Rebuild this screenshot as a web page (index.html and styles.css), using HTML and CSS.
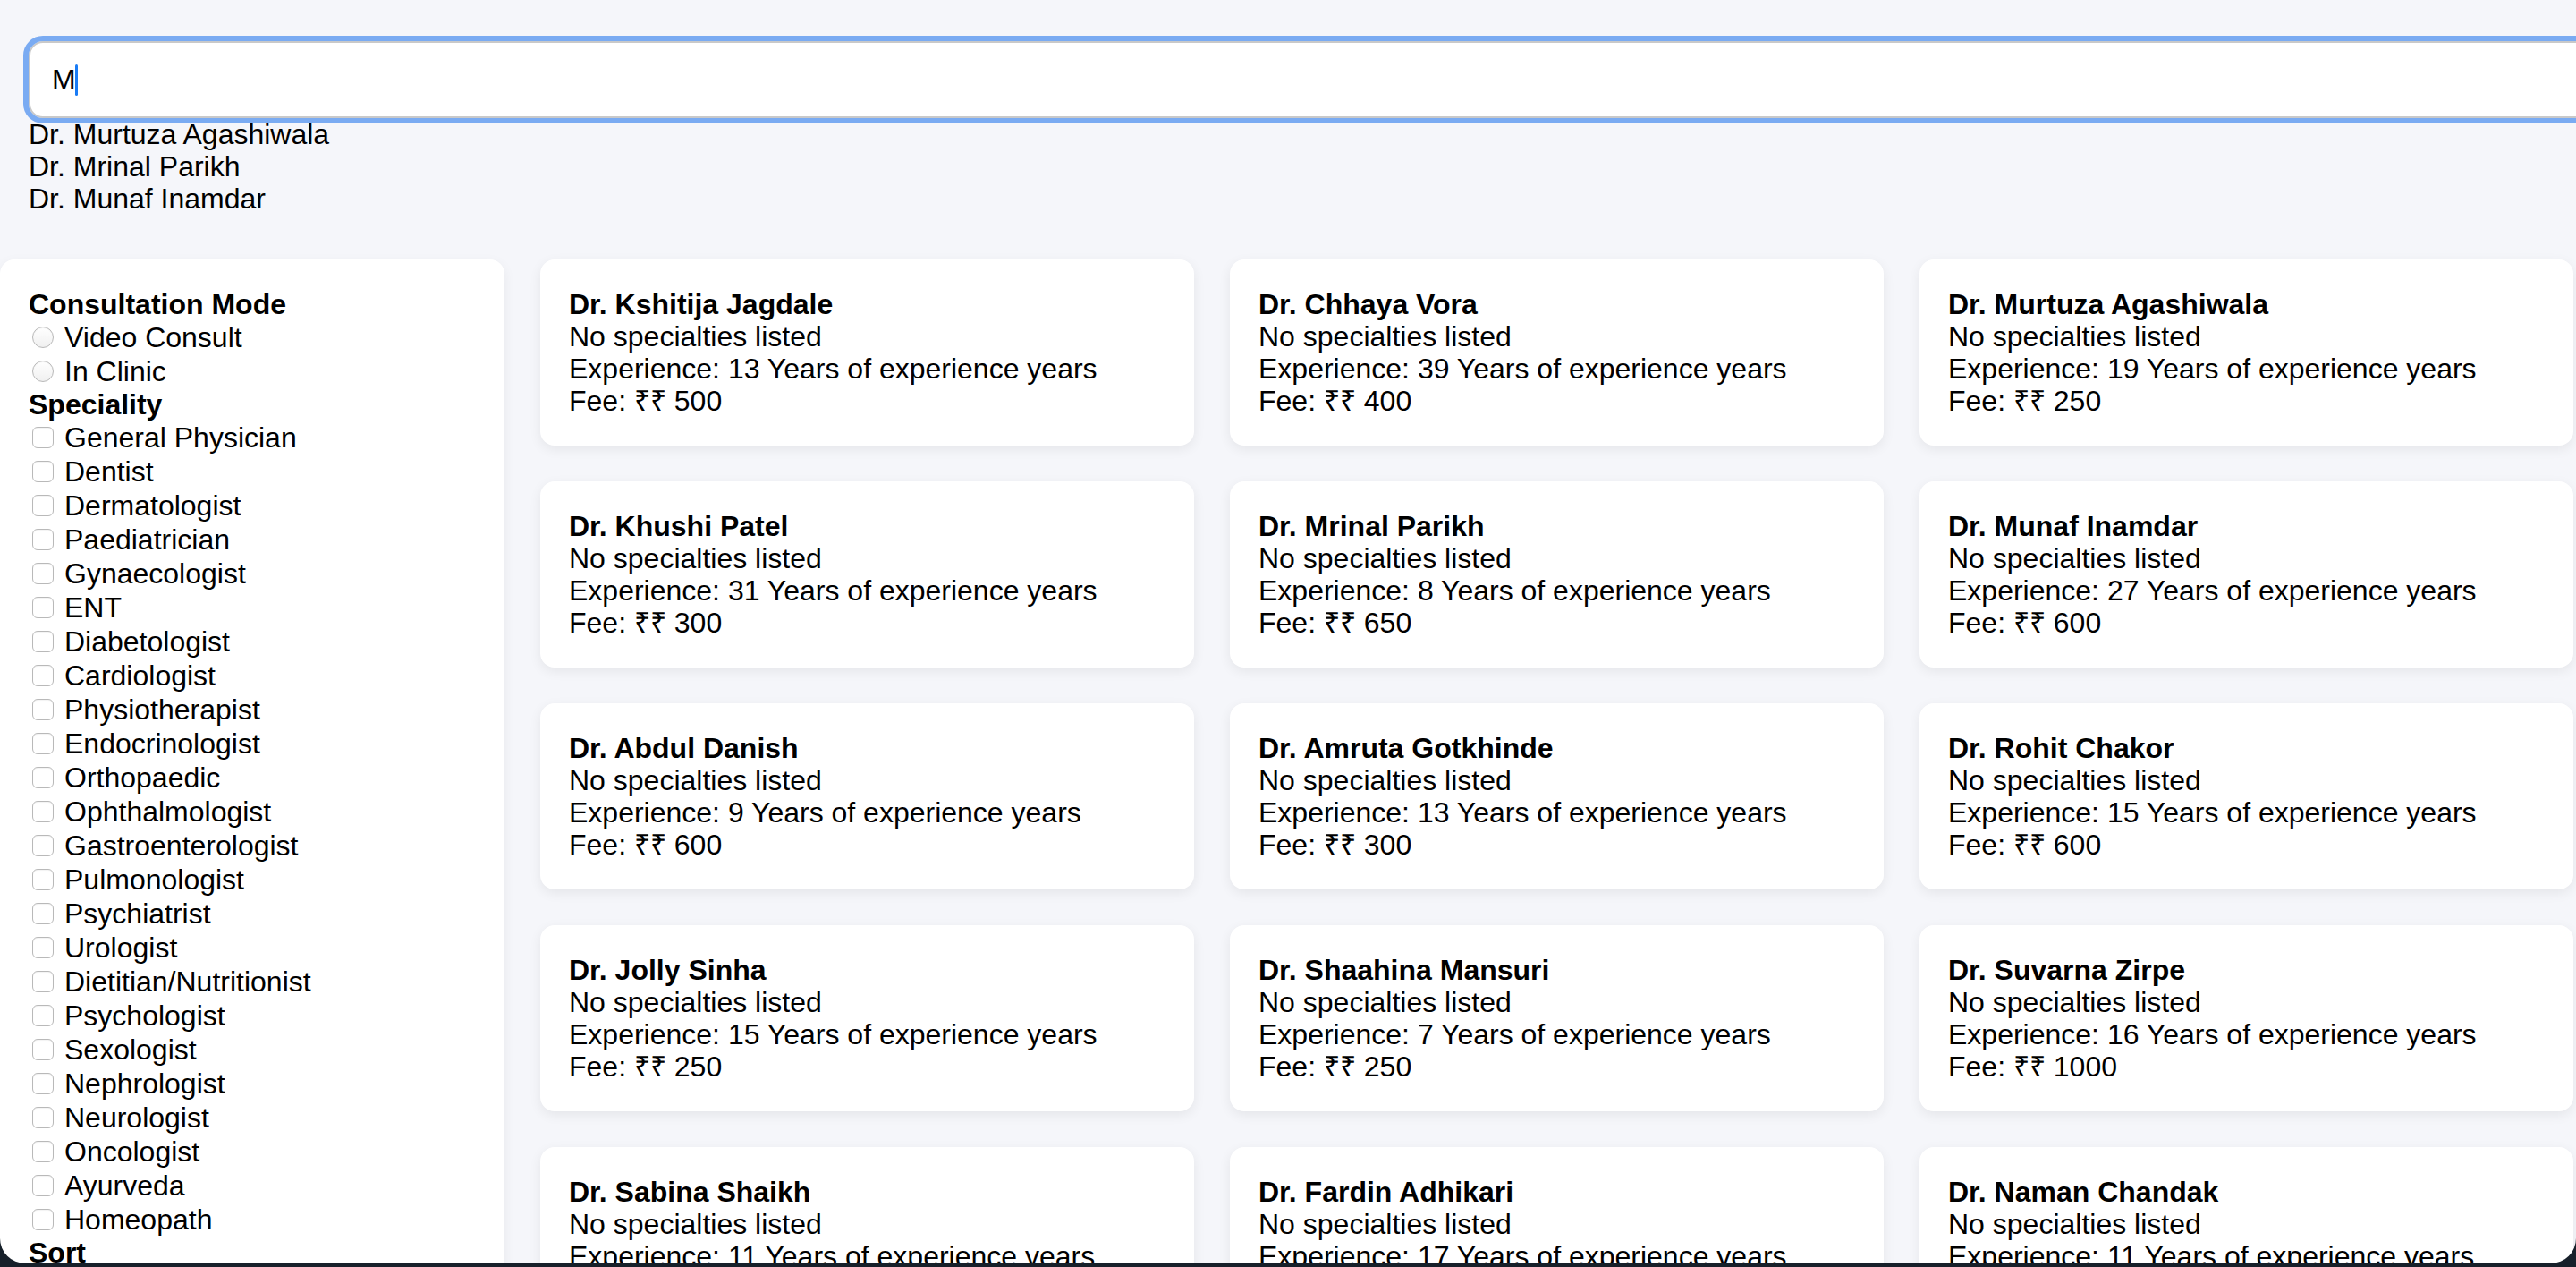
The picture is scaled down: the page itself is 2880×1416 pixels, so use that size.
FILE: index.html
```html
<!DOCTYPE html>
<html lang="en">
<head>
<meta charset="utf-8">
<title>Find Doctors</title>
<link rel="stylesheet" href="styles.css">
</head>
<body>
<div class="frame"></div>
<header class="search">
  <div class="search-box">
    <input class="search-input" type="text" value="M" aria-label="Search doctors">
    <span class="caret"></span>
  </div>
  <ul class="suggestions">
    <li>Dr. Murtuza Agashiwala</li>
    <li>Dr. Mrinal Parikh</li>
    <li>Dr. Munaf Inamdar</li>
  </ul>
</header>
<main class="main">
  <aside class="sidebar">
    <h3 class="filter-title">Consultation Mode</h3>
    <label class="option"><input type="radio" name="mode" class="radio"><span>Video Consult</span></label>
    <label class="option"><input type="radio" name="mode" class="radio"><span>In Clinic</span></label>
    <h3 class="filter-title">Speciality</h3>
    <label class="option"><input type="checkbox" class="check"><span>General Physician</span></label>
    <label class="option"><input type="checkbox" class="check"><span>Dentist</span></label>
    <label class="option"><input type="checkbox" class="check"><span>Dermatologist</span></label>
    <label class="option"><input type="checkbox" class="check"><span>Paediatrician</span></label>
    <label class="option"><input type="checkbox" class="check"><span>Gynaecologist</span></label>
    <label class="option"><input type="checkbox" class="check"><span>ENT</span></label>
    <label class="option"><input type="checkbox" class="check"><span>Diabetologist</span></label>
    <label class="option"><input type="checkbox" class="check"><span>Cardiologist</span></label>
    <label class="option"><input type="checkbox" class="check"><span>Physiotherapist</span></label>
    <label class="option"><input type="checkbox" class="check"><span>Endocrinologist</span></label>
    <label class="option"><input type="checkbox" class="check"><span>Orthopaedic</span></label>
    <label class="option"><input type="checkbox" class="check"><span>Ophthalmologist</span></label>
    <label class="option"><input type="checkbox" class="check"><span>Gastroenterologist</span></label>
    <label class="option"><input type="checkbox" class="check"><span>Pulmonologist</span></label>
    <label class="option"><input type="checkbox" class="check"><span>Psychiatrist</span></label>
    <label class="option"><input type="checkbox" class="check"><span>Urologist</span></label>
    <label class="option"><input type="checkbox" class="check"><span>Dietitian/Nutritionist</span></label>
    <label class="option"><input type="checkbox" class="check"><span>Psychologist</span></label>
    <label class="option"><input type="checkbox" class="check"><span>Sexologist</span></label>
    <label class="option"><input type="checkbox" class="check"><span>Nephrologist</span></label>
    <label class="option"><input type="checkbox" class="check"><span>Neurologist</span></label>
    <label class="option"><input type="checkbox" class="check"><span>Oncologist</span></label>
    <label class="option"><input type="checkbox" class="check"><span>Ayurveda</span></label>
    <label class="option"><input type="checkbox" class="check"><span>Homeopath</span></label>
    <h3 class="filter-title">Sort</h3>
    <label class="option"><input type="radio" name="sort" class="radio"><span>Fees</span></label>
    <label class="option"><input type="radio" name="sort" class="radio"><span>Experience</span></label>
  </aside>
  <section class="grid">
    <article class="card"><h4 class="name">Dr. Kshitija Jagdale</h4><p>No specialties listed</p><p>Experience: 13 Years of experience years</p><p>Fee: ₹₹ 500</p></article>
    <article class="card"><h4 class="name">Dr. Chhaya Vora</h4><p>No specialties listed</p><p>Experience: 39 Years of experience years</p><p>Fee: ₹₹ 400</p></article>
    <article class="card"><h4 class="name">Dr. Murtuza Agashiwala</h4><p>No specialties listed</p><p>Experience: 19 Years of experience years</p><p>Fee: ₹₹ 250</p></article>
    <article class="card"><h4 class="name">Dr. Khushi Patel</h4><p>No specialties listed</p><p>Experience: 31 Years of experience years</p><p>Fee: ₹₹ 300</p></article>
    <article class="card"><h4 class="name">Dr. Mrinal Parikh</h4><p>No specialties listed</p><p>Experience: 8 Years of experience years</p><p>Fee: ₹₹ 650</p></article>
    <article class="card"><h4 class="name">Dr. Munaf Inamdar</h4><p>No specialties listed</p><p>Experience: 27 Years of experience years</p><p>Fee: ₹₹ 600</p></article>
    <article class="card"><h4 class="name">Dr. Abdul Danish</h4><p>No specialties listed</p><p>Experience: 9 Years of experience years</p><p>Fee: ₹₹ 600</p></article>
    <article class="card"><h4 class="name">Dr. Amruta Gotkhinde</h4><p>No specialties listed</p><p>Experience: 13 Years of experience years</p><p>Fee: ₹₹ 300</p></article>
    <article class="card"><h4 class="name">Dr. Rohit Chakor</h4><p>No specialties listed</p><p>Experience: 15 Years of experience years</p><p>Fee: ₹₹ 600</p></article>
    <article class="card"><h4 class="name">Dr. Jolly Sinha</h4><p>No specialties listed</p><p>Experience: 15 Years of experience years</p><p>Fee: ₹₹ 250</p></article>
    <article class="card"><h4 class="name">Dr. Shaahina Mansuri</h4><p>No specialties listed</p><p>Experience: 7 Years of experience years</p><p>Fee: ₹₹ 250</p></article>
    <article class="card"><h4 class="name">Dr. Suvarna Zirpe</h4><p>No specialties listed</p><p>Experience: 16 Years of experience years</p><p>Fee: ₹₹ 1000</p></article>
    <article class="card"><h4 class="name">Dr. Sabina Shaikh</h4><p>No specialties listed</p><p>Experience: 11 Years of experience years</p><p>Fee: ₹₹ 500</p></article>
    <article class="card"><h4 class="name">Dr. Fardin Adhikari</h4><p>No specialties listed</p><p>Experience: 17 Years of experience years</p><p>Fee: ₹₹ 500</p></article>
    <article class="card"><h4 class="name">Dr. Naman Chandak</h4><p>No specialties listed</p><p>Experience: 11 Years of experience years</p><p>Fee: ₹₹ 500</p></article>
  </section>
</main>
</body>
</html>
```
FILE: styles.css
```css
html {
  overflow: hidden;
}

body {
  margin: 0;
  background: #f5f6fa;
  color: #000;
  font-family: "Liberation Sans", Arial, Helvetica, sans-serif;
  font-size: 32px;
  line-height: 36px;
  overflow: hidden;
}

.frame {
  position: fixed;
  top: 0;
  left: 0;
  right: 0;
  bottom: 4px;
  border-radius: 0 0 28px 28px;
  box-shadow: 0 0 0 60px #17202a;
  pointer-events: none;
  z-index: 10;
}

.search {
  padding: 46px 0 0 32px;
}

.search-box {
  position: relative;
  width: 3000px;
}

.search-input {
  display: block;
  box-sizing: border-box;
  width: 100%;
  height: 86px;
  margin: 0;
  padding: 0 24px;
  border: 2px solid #c9c9c9;
  border-radius: 16px;
  outline: 6px solid #7aabf2;
  background: #fff;
  color: #000;
  font-family: "Liberation Sans", Arial, Helvetica, sans-serif;
  font-size: 32px;
}

.caret {
  position: absolute;
  left: 52px;
  top: 26px;
  width: 3px;
  height: 35px;
  border-radius: 2px;
  background: #1a7cf5;
}

.suggestions {
  list-style: none;
  margin: 0;
  padding: 0;
}

.suggestions li {
  line-height: 36px;
}

.main {
  display: flex;
  align-items: flex-start;
  gap: 40px;
  margin-top: 50px;
}

.sidebar {
  box-sizing: border-box;
  flex: 0 0 564px;
  padding: 32px;
  background: #fff;
  border-radius: 16px;
  box-shadow: 0 4px 14px rgba(0, 0, 0, 0.06);
}

.filter-title {
  margin: 0;
  font-size: 32px;
  line-height: 36px;
  font-weight: bold;
}

.option {
  display: flex;
  align-items: center;
  height: 38px;
}

.check,
.radio {
  appearance: none;
  -webkit-appearance: none;
  box-sizing: border-box;
  flex: 0 0 24px;
  width: 24px;
  height: 24px;
  margin: 0 12px 0 4px;
  border: 1.5px solid #b9b9b9;
  background: #fff;
  box-shadow: inset 0 1px 1px rgba(0, 0, 0, 0.05);
}

.check {
  border-radius: 6px;
}

.radio {
  border-radius: 50%;
  background: linear-gradient(#ffffff, #f0f0f0);
}

.grid {
  display: grid;
  grid-template-columns: repeat(3, 731px);
  gap: 40px;
}

.card {
  box-sizing: border-box;
  padding: 32px;
  background: #fff;
  border-radius: 16px;
  box-shadow: 0 4px 14px rgba(0, 0, 0, 0.07);
}

.name {
  margin: 0;
  font-size: 32px;
  line-height: 36px;
  font-weight: bold;
}

.card p {
  margin: 0;
  line-height: 36px;
}
```
